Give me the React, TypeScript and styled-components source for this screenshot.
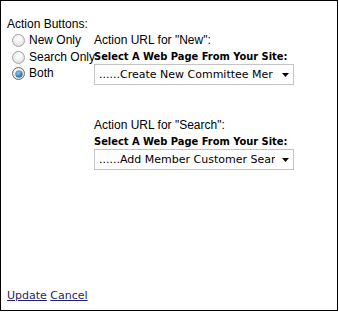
import React, { useState } from 'react'
import styled, { createGlobalStyle } from 'styled-components'

const GlobalStyle = createGlobalStyle`
  html, body {
    margin: 0;
    padding: 0;
    background: #fff;
  }
`

const Panel = styled.div`
  box-sizing: border-box;
  width: 338px;
  height: 311px;
  border: 1px solid #000;
  padding: 15px 6px 6px 6px;
  display: flex;
  flex-direction: column;
  font-family: "Liberation Sans", Arial, sans-serif;
  font-size: 12px;
  color: #000;
`

const Title = styled.div`
  line-height: 16px;
`

const Columns = styled.div`
  display: flex;
  flex-direction: row;
  align-items: flex-start;
`

const RadioList = styled.div`
  flex: none;
  width: 87px;
  display: flex;
  flex-direction: column;
`

const RadioRow = styled.label`
  display: flex;
  align-items: center;
  height: 16.5px;
  white-space: nowrap;
  cursor: default;
`

const RadioInput = styled.input`
  appearance: none;
  box-sizing: border-box;
  width: 13px;
  height: 13px;
  margin: 1px 4px 0 5px;
  flex: none;
  border-radius: 50%;
  border: 1px solid #a4a4a4;
  background: radial-gradient(circle at 50% 35%, #ffffff 0%, #f1f1f1 45%, #d2d2d2 100%);
  position: relative;
  &:checked {
    border-color: #5c6b7a;
  }
  &:checked::after {
    content: '';
    position: absolute;
    left: 2.5px;
    top: 2.5px;
    width: 6px;
    height: 6px;
    border-radius: 50%;
    background: radial-gradient(circle at 40% 35%, #8fd0f7 0%, #2c86c8 55%, #0d3f73 100%);
    box-shadow: 0 0 0 0.5px #1a3556;
  }
`

const UrlColumn = styled.div`
  display: flex;
  flex-direction: column;
`

const UrlGroup = styled.div<{ $spaced?: boolean }>`
  display: flex;
  flex-direction: column;
  margin-top: ${p => (p.$spaced ? '32.5px' : '0')};
`

const UrlLabel = styled.div`
  line-height: 16.5px;
  white-space: nowrap;
`

const PickLabel = styled.div`
  font-family: "DejaVu Sans Condensed", "DejaVu Sans", Verdana, sans-serif;
  font-stretch: condensed;
  font-weight: bold;
  font-size: 11px;
  line-height: 15px;
  white-space: nowrap;
`

const SelectWrap = styled.div`
  position: relative;
  width: 200px;
  height: 21px;
`

const PageSelect = styled.select`
  appearance: none;
  box-sizing: border-box;
  width: 100%;
  height: 100%;
  margin: 0;
  padding: 0 18px 0 4px;
  border: 1px solid #c4c4c4;
  border-radius: 0;
  background: #fff;
  color: #000;
  font-family: "DejaVu Sans", Verdana, sans-serif;
  font-size: 11px;
  outline: none;
`

const Arrow = styled.svg`
  position: absolute;
  right: 5px;
  top: 9px;
  pointer-events: none;
`

const Footer = styled.div`
  margin-top: auto;
  font-family: "DejaVu Sans", Verdana, sans-serif;
  font-size: 11px;
  line-height: 16px;
  display: flex;
  gap: 3.5px;
`

const FooterLink = styled.a`
  color: #1f1f6b;
  text-decoration: underline;
  cursor: pointer;
`

type ActionMode = 'new' | 'search' | 'both'

const modes: { value: ActionMode, label: string }[] = [
  { value: 'new', label: 'New Only' },
  { value: 'search', label: 'Search Only' },
  { value: 'both', label: 'Both' }
]

interface PagePickerProps {
  label: string
  value: string
  spaced?: boolean
}

const PagePicker: React.FC<PagePickerProps> = ({ label, value, spaced }) => (
  <UrlGroup $spaced={spaced}>
    <UrlLabel>{label}</UrlLabel>
    <PickLabel>Select A Web Page From Your Site:</PickLabel>
    <SelectWrap>
      <PageSelect defaultValue={value}>
        <option value={value}>{value}</option>
      </PageSelect>
      <Arrow width='7' height='4' viewBox='0 0 7 4'>
        <path d='M0 0H7L3.5 4Z' fill='#000' />
      </Arrow>
    </SelectWrap>
  </UrlGroup>
)

const App: React.FC = () => {
  const [mode, setMode] = useState<ActionMode>('both')

  return (
    <>
      <GlobalStyle />
      <Panel>
        <Title>Action Buttons:</Title>
        <Columns>
          <RadioList>
            {modes.map(m => (
              <RadioRow key={m.value}>
                <RadioInput
                  type='radio'
                  name='actionButtons'
                  checked={mode === m.value}
                  onChange={() => setMode(m.value)}
                />
                {m.label}
              </RadioRow>
            ))}
          </RadioList>
          <UrlColumn>
            <PagePicker label='Action URL for "New":' value='......Create New Committee Mer' />
            <PagePicker label='Action URL for "Search":' value='......Add Member Customer Sear' spaced />
          </UrlColumn>
        </Columns>
        <Footer>
          <FooterLink>Update</FooterLink>
          <FooterLink>Cancel</FooterLink>
        </Footer>
      </Panel>
    </>
  )
}

export default App
